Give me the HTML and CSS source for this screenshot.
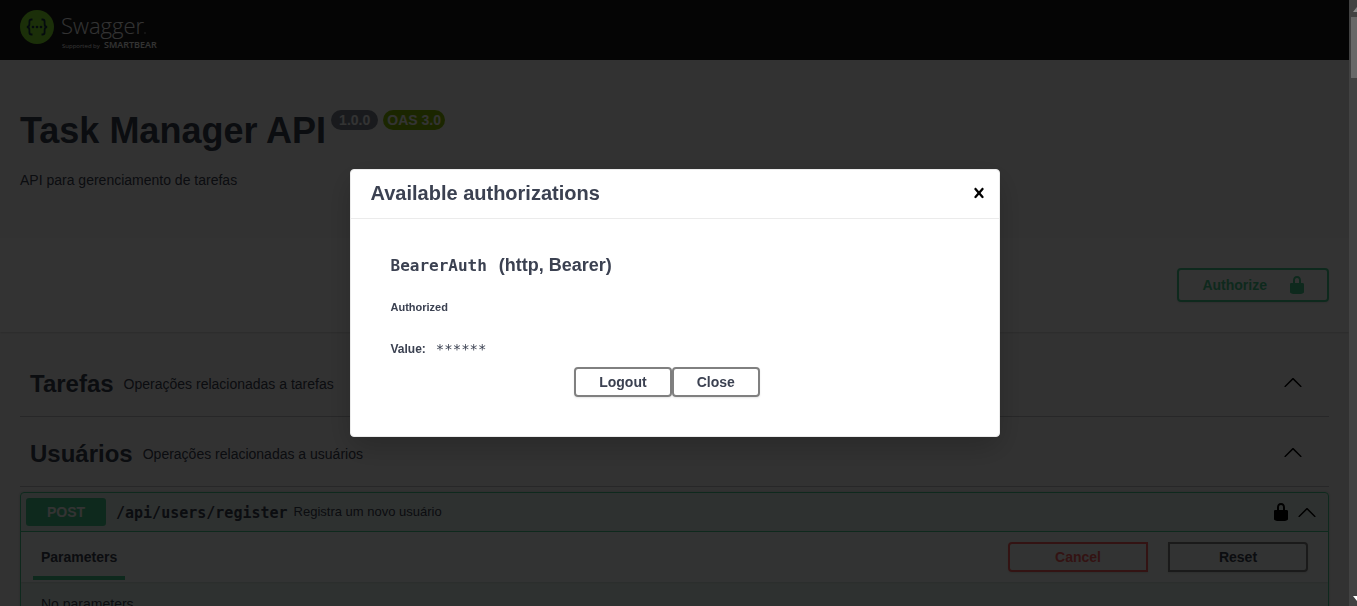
FILE: index.html
```html
<!DOCTYPE html>
<html lang="pt-BR">
<head>
<meta charset="utf-8">
<meta name="viewport" content="width=device-width, initial-scale=1">
<title>Task Manager API</title>
<link rel="stylesheet" href="styles.css">
</head>
<body>
<svg class="sprite" aria-hidden="true">
  <symbol id="lock" viewBox="0 0 20 20"><path d="M15.8 8H14V5.6C14 2.703 12.665 1 10 1 7.334 1 6 2.703 6 5.6V8H4c-.553 0-1 .646-1 1.199V17c0 .549.428 1.139.951 1.307l1.197.387C5.672 18.861 6.55 19 7.1 19h5.8c.549 0 1.428-.139 1.951-.307l1.196-.387c.524-.167.953-.757.953-1.306V9.199C17 8.646 16.352 8 15.8 8zM12 8H8V5.199C8 3.754 8.797 3 10 3c1.203 0 2 .754 2 2.199V8z"/></symbol>
  <symbol id="arrow-up" viewBox="0 0 20 20"><path d="M17.418 14.908c.272.281.701.281.979 0s.271-.709 0-.987l-7.908-7.83c-.27-.28-.707-.28-.979 0l-7.908 7.83c-.27.278-.27.707 0 .987.27.281.709.281.979 0L10 7.767l7.418 7.141z"/></symbol>
  <symbol id="close" viewBox="0 0 20 20"><path d="M14.348 14.849c-.469.469-1.229.469-1.697 0L10 11.819l-2.651 3.029c-.469.469-1.229.469-1.697 0-.469-.469-.469-1.229 0-1.697l2.758-3.15-2.759-3.152c-.469-.469-.469-1.228 0-1.697s1.228-.469 1.697 0L10 8.183l2.651-3.031c.469-.469 1.228-.469 1.697 0s.469 1.229 0 1.697l-2.758 3.152 2.758 3.15c.469.469.469 1.229 0 1.698z"/></symbol>
</svg>

<div class="page">
  <header class="topbar">
    <a class="logo" href="#" aria-label="Swagger">
      <svg width="142" height="42" viewBox="0 0 142 42">
        <circle cx="17" cy="18" r="17" fill="#85ea2d"/>
        <g fill="none" stroke="#173647" stroke-width="1.8">
          <path d="M12.500 10.500h-1c-1.600 0-2.100.9-2.100 2.300v2.200c0 1.900-.7 3-2.600 3 1.900 0 2.600 1.100 2.600 3v2.200c0 1.400.5 2.300 2.100 2.300h1"/>
          <path d="M21.500 10.500h1c1.600 0 2.100.9 2.100 2.300v2.200c0 1.900.7 3 2.600 3-1.900 0-2.600 1.100-2.600 3v2.200c0 1.400-.5 2.300-2.100 2.300h-1"/>
        </g>
        <g fill="#173647"><circle cx="13" cy="18" r="1.300"/><circle cx="17" cy="18" r="1.300"/><circle cx="21" cy="18" r="1.300"/></g>
        <text class="logo-name" x="41" y="25">Swagger</text>
        <circle cx="125" cy="24" r="1" fill="#777"/>
        <text class="logo-by" x="42" y="39">Supported by</text>
        <text class="logo-brand" x="84" y="39">SMARTBEAR</text>
      </svg>
    </a>
  </header>

  <main>
    <section class="info wrapper">
      <div class="title-row">
        <h1>Task Manager API</h1>
        <span class="badge">1.0.0</span>
        <span class="badge badge-oas">OAS 3.0</span>
      </div>
      <p>API para gerenciamento de tarefas</p>
    </section>

    <section class="scheme">
      <div class="wrapper scheme-inner">
        <button class="btn authorize" type="button"><span>Authorize</span><svg class="icon"><use href="#lock"/></svg></button>
      </div>
    </section>

    <div class="wrapper operations">
      <section class="tag">
        <h2>Tarefas</h2><p>Operações relacionadas a tarefas</p>
        <button class="plain" type="button" aria-label="Tarefas"><svg class="icon"><use href="#arrow-up"/></svg></button>
      </section>
      <section class="tag">
        <h2>Usuários</h2><p>Operações relacionadas a usuários</p>
        <button class="plain" type="button" aria-label="Usuários"><svg class="icon"><use href="#arrow-up"/></svg></button>
      </section>
      <article class="opblock">
        <div class="summary">
          <span class="method">POST</span>
          <span class="path">/api/users/register</span>
          <span class="summary-text">Registra um novo usuário</span>
          <button class="plain" type="button" aria-label="Authorization"><svg class="icon"><use href="#lock"/></svg></button>
          <button class="plain" type="button" aria-label="Collapse"><svg class="icon"><use href="#arrow-up"/></svg></button>
        </div>
        <div class="params-header">
          <h3>Parameters</h3>
          <div class="params-actions">
            <button class="btn cancel" type="button">Cancel</button>
            <button class="btn reset" type="button">Reset</button>
          </div>
        </div>
        <div class="params-body">No parameters</div>
      </article>
    </div>
  </main>
</div>

<div class="overlay">
  <div class="modal" role="dialog" aria-modal="true" aria-labelledby="auth-title">
    <div class="modal-header">
      <h2 id="auth-title">Available authorizations</h2>
      <button class="plain" type="button" aria-label="Close"><svg class="icon"><use href="#close"/></svg></button>
    </div>
    <div class="modal-body">
      <h3><code>BearerAuth</code><span>(http, Bearer)</span></h3>
      <h4>Authorized</h4>
      <div class="value"><span>Value:</span><code>******</code></div>
      <div class="modal-actions">
        <button class="btn" type="button">Logout</button>
        <button class="btn" type="button">Close</button>
      </div>
    </div>
  </div>
</div>

<div class="scrollbar" aria-hidden="true">
  <svg class="scroll-up" viewBox="0 0 8 5"><path d="M0 5L4 0l4 5z" fill="#8b8b8b"/></svg>
  <div class="thumb"></div>
  <svg class="scroll-down" viewBox="0 0 8 5"><path d="M0 0h8L4 5z" fill="#fff"/></svg>
</div>
</body>
</html>
```

FILE: styles.css
```css
* { box-sizing: border-box; }
html, body { height: 100%; margin: 0; overflow: hidden; }
body {
  background: #fafafa;
  color: #3b4151;
  font-family: "Liberation Sans", Arial, sans-serif;
  font-size: 14px;
  line-height: 16px;
}
h1, h2, h3, h4, p { margin: 0; }
button { font: inherit; color: inherit; }
code, .path { font-family: "DejaVu Sans Mono", monospace; }

.sprite { position: absolute; width: 0; height: 0; }
.icon { display: block; width: 20px; height: 20px; fill: currentColor; }
.plain { display: block; padding: 0; border: 0; background: none; color: #000; }
.page { padding-right: 8px; }
.wrapper { padding: 0 20px; }

.topbar { height: 60px; padding: 9px 20px; background: #1b1b1b; }
.logo, .logo svg { display: block; }
.logo { width: 142px; }
.logo text { font-family: "Open Sans", sans-serif; fill: #fff; }
.logo .logo-name { font-size: 22px; font-weight: 300; }
.logo .logo-by { font-size: 6px; }
.logo .logo-brand { font-size: 9px; font-weight: 600; }

.info { padding-top: 50px; padding-bottom: 50px; }
.title-row { display: flex; align-items: flex-start; gap: 5px; }
.title-row h1 { font-size: 36px; line-height: 42px; }
.badge {
  padding: 2px 8px;
  border-radius: 20px;
  background: #7d8492;
  color: #fff;
  font-weight: 700;
}
.badge-oas { padding: 2px 4px; background: #89bf04; }
.info p { margin-top: 20px; }

.scheme { padding: 30px 0; background: #fff; box-shadow: 0 1px 2px rgba(0, 0, 0, .15); }
.scheme-inner { display: flex; justify-content: flex-end; }

.btn {
  padding: 5px 23px;
  border: 2px solid gray;
  border-radius: 4px;
  background: transparent;
  box-shadow: 0 1px 2px rgba(0, 0, 0, .1);
  font-weight: 700;
}
.authorize {
  display: flex;
  align-items: center;
  gap: 20px;
  padding-right: 20px;
  border-color: #49cc90;
  color: #49cc90;
}

.operations { padding-top: 15px; }
.tag {
  display: flex;
  align-items: center;
  height: 70px;
  padding: 0 26px 0 10px;
  border-bottom: 1px solid rgba(59, 65, 81, .3);
}
.tag h2, .tag p { padding-top: 4px; }
.tag h2 { font-size: 24px; line-height: 28px; }
.tag p { flex: 1; padding-left: 10px; }

.opblock {
  margin-top: 5px;
  border: 1px solid #49cc90;
  border-radius: 4px;
  background: rgba(73, 204, 144, .1);
  box-shadow: 0 0 3px rgba(0, 0, 0, .19);
}
.summary {
  display: flex;
  align-items: center;
  padding: 5px 11px 5px 5px;
  border-bottom: 1px solid #49cc90;
}
.method {
  width: 80px;
  padding: 6px 0;
  border-radius: 3px;
  background: #49cc90;
  color: #fff;
  font-weight: 700;
  text-align: center;
}
.path { padding: 2px 6px 0 10px; font-size: 15px; font-weight: 700; }
.summary-text { flex: 1; font-size: 13px; }
.summary .plain + .plain { margin-left: 6px; }

.params-header {
  display: flex;
  justify-content: space-between;
  height: 50px;
  padding: 0 20px 0 12px;
  background: rgba(255, 255, 255, .8);
  box-shadow: 0 1px 2px rgba(0, 0, 0, .1);
}
.params-header h3 {
  height: 48px;
  padding: 17px 8px 0;
  border-bottom: 4px solid #49cc90;
  font-size: 14px;
}
.params-actions { display: flex; align-items: center; gap: 20px; }
.params-actions .btn { width: 140px; }
.cancel { border-color: #ff6060; border-radius: 4px 0 0 4px; color: #ff6060; }
.reset { border-radius: 0 4px 4px 0; }
.params-body { padding: 14px 20px; }

.overlay {
  position: fixed;
  inset: 0 8px 0 0;
  display: flex;
  align-items: center;
  justify-content: center;
  background: rgba(0, 0, 0, .8);
}
.modal {
  width: 650px;
  max-width: 100%;
  border: 1px solid #ebebeb;
  border-radius: 4px;
  background: #fff;
  box-shadow: 0 10px 30px rgba(0, 0, 0, .2);
}
.modal-header {
  display: flex;
  align-items: center;
  justify-content: space-between;
  padding: 11px 10px 13px 20px;
  border-bottom: 1px solid #ebebeb;
}
.modal-header h2 { font-size: 20px; line-height: 24px; }
.modal-body { padding: 36px 40px 39px; }
.modal-body h3 { display: flex; align-items: baseline; gap: 12px; font-size: 18px; line-height: 20px; }
.modal-body h3 code { font-size: 16px; }
.modal-body h4 { margin-top: 23px; font-size: 11px; line-height: 16px; }
.value { display: flex; align-items: center; gap: 10px; margin-top: 26px; }
.value span { font-size: 12px; font-weight: 700; }
.value code { font-size: 14px; }
.modal-actions { display: flex; justify-content: center; margin-top: 10px; padding-right: 15px; }

.scrollbar {
  position: fixed;
  inset: 0 0 0 auto;
  display: flex;
  flex-direction: column;
  width: 8px;
  padding: 7px 0 0 2px;
  overflow: hidden;
  background: #424242;
}
.scrollbar svg { flex: none; width: 8px; height: 5px; margin-left: 2px; }
.thumb { height: 61px; margin-top: 5px; background: #686868; }
.scrollbar .scroll-down { margin-top: auto; margin-bottom: 5px; }
```
